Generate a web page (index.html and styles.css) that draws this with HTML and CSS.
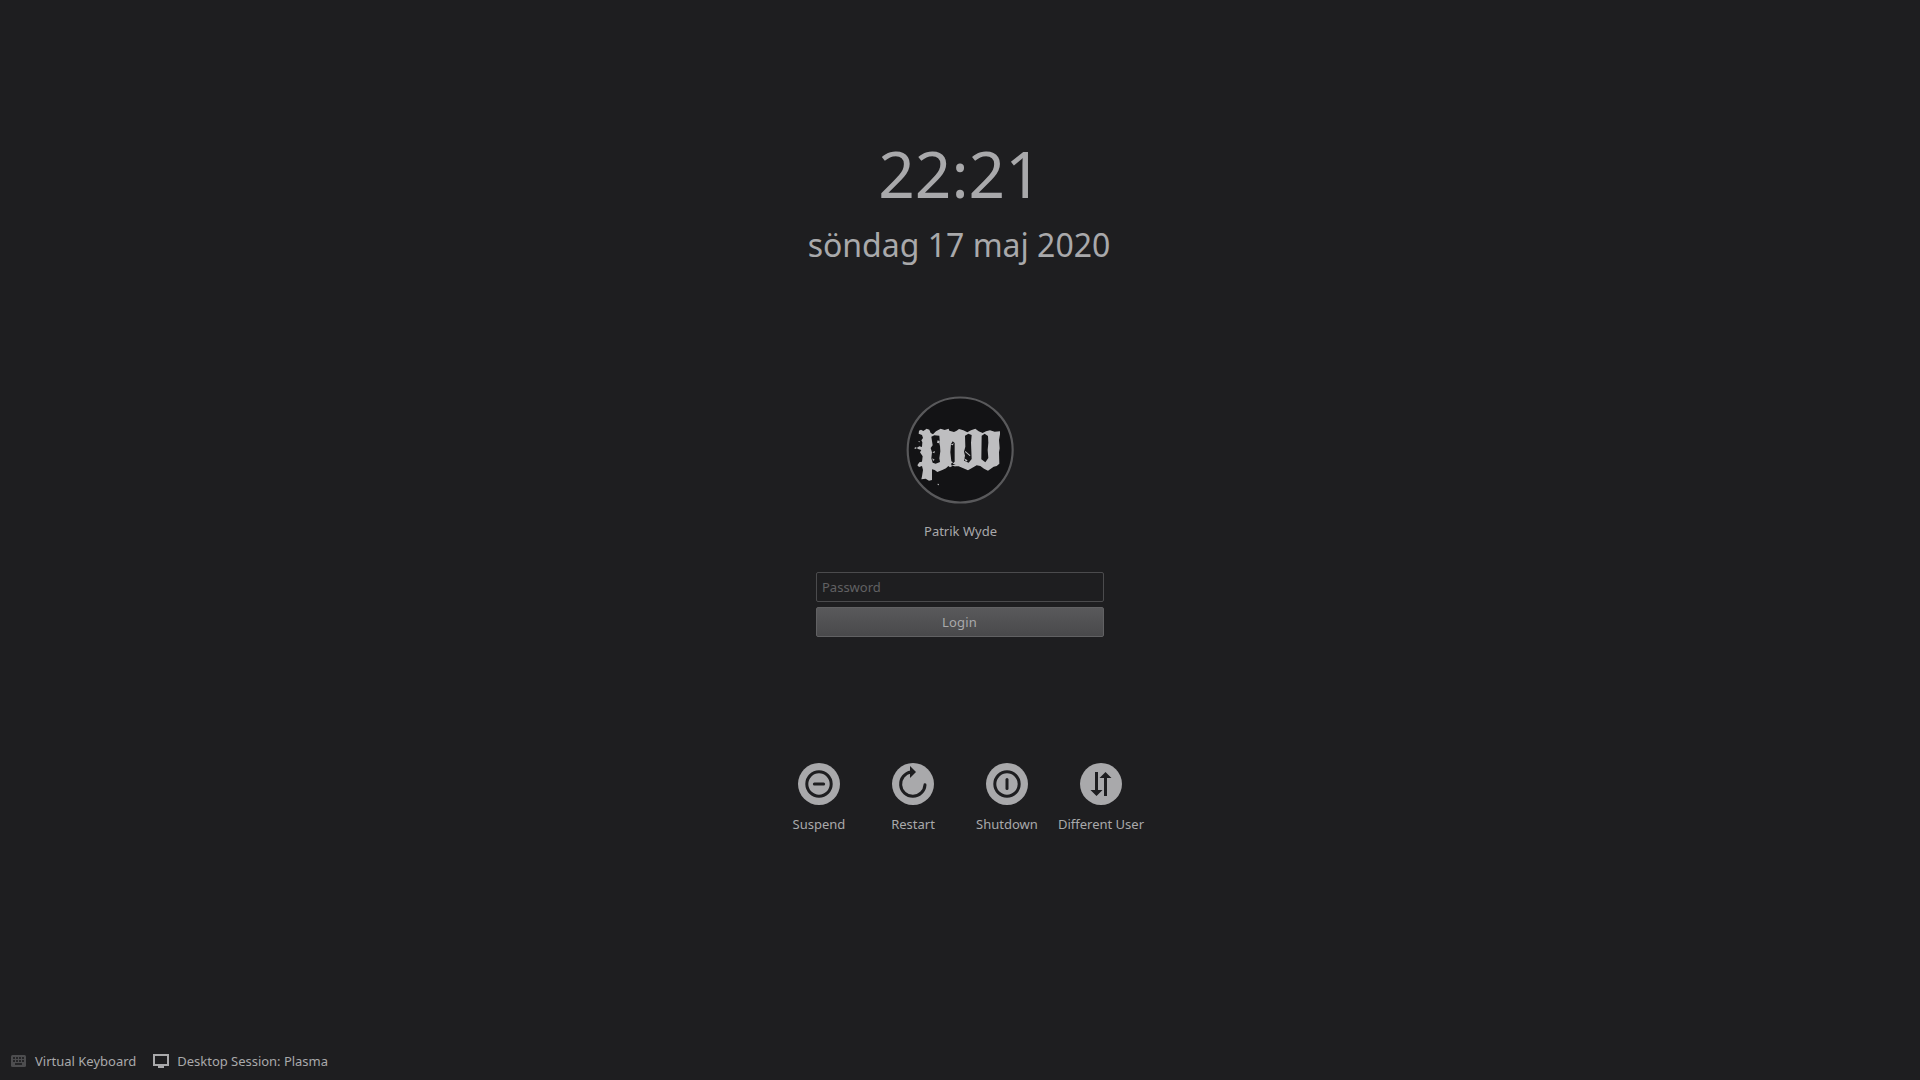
FILE: index.html
```html
<!DOCTYPE html>
<html lang="sv">
<head>
<meta charset="utf-8">
<title>Login</title>
<link rel="stylesheet" href="styles.css">
</head>
<body>
<main class="greeter">
  <header class="clock">
    <time class="clock-time">22:21</time>
    <span class="clock-date">söndag 17 maj 2020</span>
  </header>
  <section class="user">
    <svg class="avatar" viewBox="0 0 360 360" role="img" aria-label="pw">
      <circle cx="180.500" cy="180" r="157.500" fill="#131315" stroke="#59595b" stroke-width="6.500"/>
      <path fill="#bebec0" fill-rule="evenodd" d="M57 122 63 119 70 123 80 116 88 119 92 129 99 133 108 124 122 116 134 120 146 116 148 122 162 126 170 122 177 117 190 121 202 127 213 121 226 116 236 124 248 129 258 124 270 121 284 125 300 124 300 133 297 150 299 175 297 187 298 221 290 228 281 230 264 242 252 236 241 228 230 226 216 234 204 241 190 235 176 229 163 229 167 224 158 221 164 215 164 159 158 154 153 162 151 187 154 214 159 217 153 221 156 229 150 232 145 228 138 235 127 240 112 246 104 240 96 238 96 270 87 272 77 266 64 268 66 259 69 240 66 228 57 231 52 226 58 217 66 215 68 199 60 187 64 180 56 178 50 174 58 169 66 171 67 157 64 151 69 144 66 135 56 131ZM94 140 103 136 118 137 119 150 118 160 120 168 121 184 118 205 120 216 107 221 98 218 94 205 96 187 92 174 98 166ZM195 137 205 131 215 135 213 158 215 207 206 218 192 212 195 197 192 185 196 170ZM245 137 254 131 264 138 265 158 263 180 265 204 256 217 244 208Z"/>
      <path fill="#bebec0" d="M43 174 48 171 50 175 45 177ZM54 155 59 153 59 157ZM97 187 105 183 103 190ZM113 151 119 154 117 160 111 158ZM97 205 104 209 99 213ZM196 183 211 196 210 199 195 186ZM151 164 162 160 158 166ZM113 281 117 282 116 286 113 285ZM153 227 172 222 166 229ZM192 205 203 211 198 215Z"/>
    </svg>
    <span class="user-name">Patrik Wyde</span>
  </section>
  <form class="login">
    <input class="password" type="password" placeholder="Password" aria-label="Password">
    <button class="submit" type="button">Login</button>
  </form>
  <nav class="actions">
    <a class="action">
      <svg class="action-icon" viewBox="0 0 42 42"><circle class="disc" cx="21" cy="21" r="21"/><circle class="line" cx="21" cy="21" r="12.200"/><path class="line" d="M16.400 21H25.600" stroke-linecap="round"/></svg>
      <span>Suspend</span>
    </a>
    <a class="action">
      <svg class="action-icon" viewBox="0 0 42 42"><circle class="disc" cx="21" cy="21" r="21"/><path class="line" d="M19 9A12.200 12.200 0 1 0 33 21.800" stroke-linecap="round"/><path class="solid" d="M18 3 24 9 18 15Z"/></svg>
      <span>Restart</span>
    </a>
    <a class="action">
      <svg class="action-icon" viewBox="0 0 42 42"><circle class="disc" cx="21" cy="21" r="21"/><circle class="line" cx="21" cy="21" r="12.200"/><path class="line" d="M21 16.400V25.600" stroke-linecap="round"/></svg>
      <span>Shutdown</span>
    </a>
    <a class="action">
      <svg class="action-icon" viewBox="0 0 42 42"><circle class="disc" cx="21" cy="21" r="21"/><path class="solid" d="M15 9H18V27H22.500L16.500 33 10.500 27H15ZM24 33V15H19.500L25.500 9 31.500 15H27V33Z"/></svg>
      <span>Different User</span>
    </a>
  </nav>
</main>
<footer class="bar">
  <span class="bar-item">
    <svg class="keyboard-icon" viewBox="0 0 15 12"><rect width="15" height="12" rx="1.500" fill="#4d4d4f"/><path fill="#1e1e20" d="M2 2h2v2H2zM5 2h2v2H5zM8 2h2v2H8zM11 2h2v2h-2zM2 5h2v2H2zM5 5h2v2H5zM8 5h2v2H8zM11 5h2v2h-2zM4 8h7v2H4z" opacity=".85"/></svg>
    Virtual Keyboard
  </span>
  <span class="bar-item session">
    <svg class="monitor-icon" viewBox="0 0 16 14"><path fill="#a9a9ab" fill-rule="evenodd" d="M0 0H16V12H11V14H5V12H0ZM2 2V10H14V2Z"/></svg>
    Desktop Session: Plasma
  </span>
</footer>
</body>
</html>
```
FILE: styles.css
```css
* { box-sizing: border-box; }

body {
  margin: 0;
  height: 1080px;
  overflow: hidden;
  display: flex;
  flex-direction: column;
  justify-content: space-between;
  background: #1e1e20;
  color: #a9a9ab;
  font: 13px/18px "Noto Sans", sans-serif;
}

.greeter {
  display: flex;
  flex-direction: column;
  align-items: center;
  padding-top: 130px;
}

.clock {
  height: 260px;
  display: flex;
  flex-direction: column;
  align-items: center;
}

.clock-time {
  font-size: 64px;
  line-height: 88px;
}

.clock-date {
  font-size: 32px;
  line-height: 46px;
  margin-top: 4px;
  padding-right: 2px;
}

.user {
  display: flex;
  flex-direction: column;
  align-items: center;
  gap: 12px;
  height: 182px;
}

.avatar { width: 120px; height: 120px; }
.user-name { padding-left: 1px; }

.login {
  display: flex;
  flex-direction: column;
  gap: 5px;
  width: 288px;
}

.password,
.submit {
  height: 30px;
  border: 1px solid #4b4b4d;
  border-radius: 2px;
  font: inherit;
  color: inherit;
}

.password {
  padding: 0 5px;
  background: transparent;
  outline: 0;
}

.password::placeholder { color: #616163; opacity: 1; }

.submit {
  padding: 0 1px 0 0;
  border-color: #616163;
  background: linear-gradient(#59595b, #49494b);
  letter-spacing: 0.2px;
}

.actions {
  display: grid;
  grid-template-columns: repeat(4, 94px);
  margin-top: 126px;
}

.action {
  display: flex;
  flex-direction: column;
  align-items: center;
  gap: 10px;
  white-space: nowrap;
}

.action-icon { width: 42px; height: 42px; }
.disc { fill: #a9a9ab; }
.line { fill: none; stroke: #1e1e20; stroke-width: 3; }
.solid { fill: #1e1e20; }

.bar {
  display: flex;
  gap: 17px;
  padding: 0 11px 10px;
}

.bar-item { display: flex; align-items: center; gap: 9px; }
.session { gap: 8px; letter-spacing: -0.02px; }
.keyboard-icon { width: 15px; height: 12px; }
.monitor-icon { width: 16px; height: 14px; }
```
